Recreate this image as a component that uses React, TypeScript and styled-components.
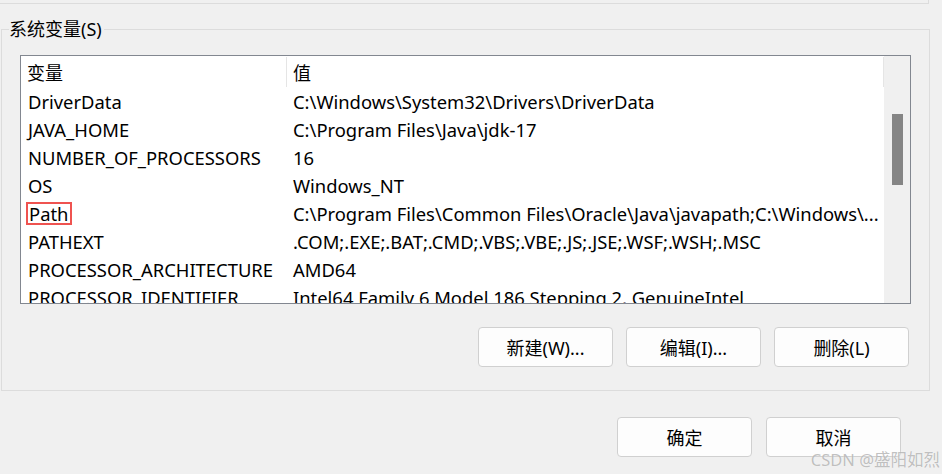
import styled, { createGlobalStyle } from 'styled-components'

const GlobalStyle = createGlobalStyle`
  html, body {
    margin: 0;
    padding: 0;
    background: #f0f0f0;
  }
  body {
    font-family: "Noto Sans", "Noto Sans CJK SC", sans-serif;
    color: #000;
  }
`

const variables = [
  { name: 'DriverData', value: 'C:\\Windows\\System32\\Drivers\\DriverData' },
  { name: 'JAVA_HOME', value: 'C:\\Program Files\\Java\\jdk-17' },
  { name: 'NUMBER_OF_PROCESSORS', value: '16' },
  { name: 'OS', value: 'Windows_NT' },
  { name: 'Path', value: 'C:\\Program Files\\Common Files\\Oracle\\Java\\javapath;C:\\Windows\\...', marked: true },
  { name: 'PATHEXT', value: '.COM;.EXE;.BAT;.CMD;.VBS;.VBE;.JS;.JSE;.WSF;.WSH;.MSC' },
  { name: 'PROCESSOR_ARCHITECTURE', value: 'AMD64' },
  { name: 'PROCESSOR_IDENTIFIER', value: 'Intel64 Family 6 Model 186 Stepping 2, GenuineIntel' },
]

const App = () => {
  return (
    <>
      <GlobalStyle />
      <Page>
        <TopEdge />
        <GroupBox>
          <Legend>系统变量(S)</Legend>
          <ListBox>
            <ListArea>
              <HeaderRow>
                <HeaderCell>变量</HeaderCell>
                <HeaderCell>值</HeaderCell>
              </HeaderRow>
              {variables.map(v => (
                <Row key={v.name}>
                  <NameCell>{v.marked ? <Marked>{v.name}</Marked> : v.name}</NameCell>
                  <ValueCell>{v.value}</ValueCell>
                </Row>
              ))}
            </ListArea>
            <ScrollBar>
              <Thumb />
            </ScrollBar>
          </ListBox>
          <ButtonRow>
            <Button>新建(W)...</Button>
            <Button>编辑(I)...</Button>
            <Button>删除(L)</Button>
          </ButtonRow>
        </GroupBox>
        <DialogButtons>
          <Button>确定</Button>
          <Button>取消</Button>
        </DialogButtons>
        <Watermark>CSDN @盛阳如烈</Watermark>
      </Page>
    </>
  )
}

const Page = styled.div`
  position: relative;
  width: 942px;
  height: 474px;
  overflow: hidden;
  padding-left: 1px;
  box-sizing: border-box;
`

const TopEdge = styled.div`
  width: 928px;
  height: 3px;
  margin-left: -1px;
  border-bottom: 1px solid #dcdcdc;
  border-right: 1px solid #dcdcdc;
`

const GroupBox = styled.fieldset`
  width: 929px;
  box-sizing: border-box;
  margin: 15px 0 0 0;
  padding: 0 18px 23px 18px;
  border: 1px solid #dcdcdc;
  min-inline-size: 0;
`

const Legend = styled.legend`
  padding: 0 2px 0 0;
  margin-left: -11px;
  font-size: 18px;
  line-height: 20px;
  color: #000;
`

const ListBox = styled.div`
  display: flex;
  margin-top: 16px;
  height: 249px;
  border: 1px solid #828790;
  background: #fff;
  box-sizing: border-box;
  overflow: hidden;
`

const ListArea = styled.div`
  width: 863px;
  flex: none;
  overflow: hidden;
`

const HeaderRow = styled.div`
  display: grid;
  grid-template-columns: 266px 1fr;
  height: 31px;
  align-items: center;
`

const HeaderCell = styled.div`
  height: 30px;
  display: flex;
  align-items: center;
  padding-left: 6px;
  font-size: 18px;
  border-right: 1px solid #e5e5e5;
  white-space: nowrap;
`

const Row = styled.div`
  display: grid;
  grid-template-columns: 266px 1fr;
  height: 28px;
  align-items: center;
  font-size: 18.4px;
  white-space: nowrap;
`

const NameCell = styled.div`
  padding-left: 7px;
  overflow: hidden;
`

const ValueCell = styled.div`
  padding-left: 6px;
  overflow: hidden;
`

const Marked = styled.span`
  display: inline-block;
  margin-left: -2px;
  padding: 0 2px 0 1px;
  line-height: 19px;
  border: 2px solid #ef5350;
`

const ScrollBar = styled.div`
  flex: 1;
  background: #f0f0f0;
  padding-top: 58px;
  display: flex;
  justify-content: center;
`

const Thumb = styled.div`
  width: 11px;
  height: 71px;
  background: #858585;
`

const ButtonRow = styled.div`
  display: flex;
  justify-content: flex-end;
  gap: 13px;
  margin-top: 23px;
  padding-right: 2px;
`

const Button = styled.button`
  width: 135px;
  height: 40px;
  box-sizing: border-box;
  border: 1px solid #d0d0d0;
  border-radius: 4px;
  background: #fdfdfd;
  font-family: "Noto Sans", "Noto Sans CJK SC", sans-serif;
  font-size: 18px;
  color: #000;
  padding: 0;
`

const DialogButtons = styled.div`
  display: flex;
  justify-content: flex-end;
  gap: 14px;
  margin-top: 26px;
  padding-right: 41px;
`

const Watermark = styled.div`
  position: absolute;
  right: 2px;
  bottom: 3px;
  font-family: "Noto Sans", "Noto Sans CJK SC", sans-serif;
  font-size: 16.5px;
  color: rgba(140, 140, 140, 0.55);
  text-shadow: 0 0 1px rgba(255, 255, 255, 0.8);
`

export default App
